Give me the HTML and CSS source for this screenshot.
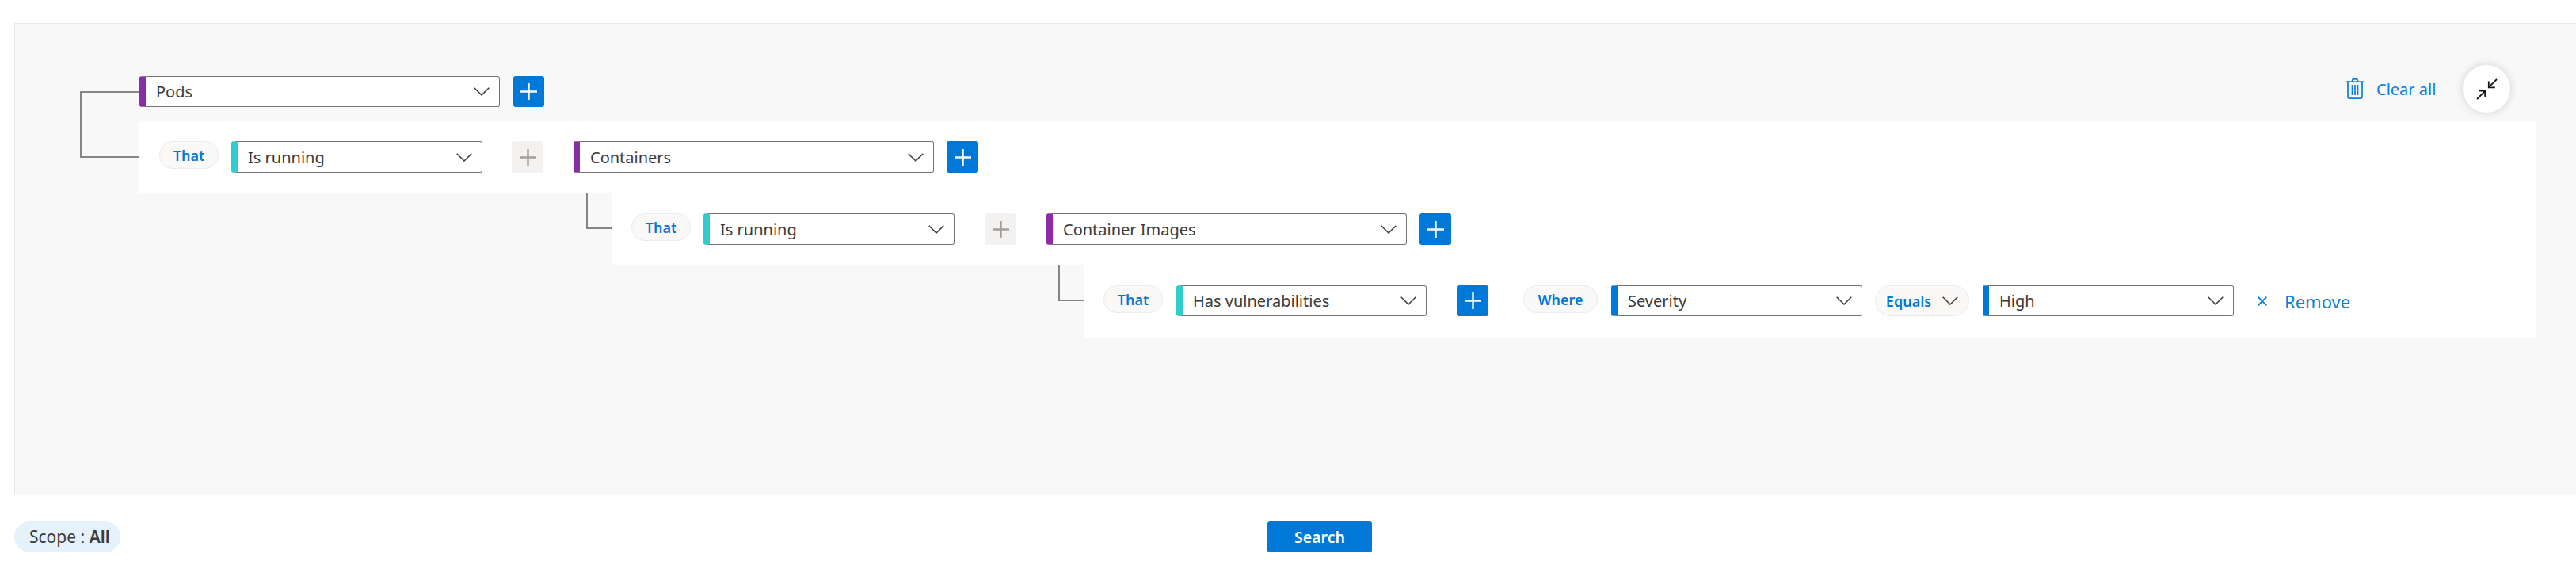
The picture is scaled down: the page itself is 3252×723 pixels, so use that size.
FILE: index.html
```
<!DOCTYPE html>
<html lang="en">
<head>
<meta charset="utf-8">
<title>Query builder</title>
<link rel="stylesheet" href="styles.css">
</head>
<body>
<svg width="0" height="0" class="defs">
  <symbol id="chevron" viewBox="0 0 20 11"><path d="M.7.7 10 10 19.3.7" fill="none" stroke="currentColor" stroke-width="1.5"/></symbol>
  <symbol id="plus" viewBox="0 0 21 21"><path d="M10.5 0v21M0 10.5h21" fill="none" stroke="currentColor" stroke-width="2.4"/></symbol>
</svg>
<main class="panel">
  <div class="root-link"></div>
  <div class="tree">
    <header class="head">
      <div class="select entity wide"><span>Pods</span><svg class="chev"><use href="#chevron"/></svg></div>
      <button class="add"><svg><use href="#plus"/></svg></button>
      <div class="clear">
        <svg class="trash" viewBox="0 0 22 26" fill="none" stroke="currentColor" stroke-width="1.7"><path d="M0 4h22M7.6 4V2.2Q7.6.9 9 .9h4Q14.4.9 14.4 2.2V4M2 4v19Q2 25.1 4.2 25.1h13.6Q20 25.1 20 23V4M7.5 8v13M11 8v13M14.5 8v13"/></svg>
        <span>Clear all</span>
      </div>
      <button class="collapse"><svg viewBox="0 0 27 27" fill="none" stroke="currentColor" stroke-width="1.8"><path d="M26 1 15.8 11.2M15.8 3.5v7.8h8M1 26 11.2 15.8M3.2 15.7h8v7.8"/></svg></button>
    </header>
    <section class="clause">
      <span class="pill">That</span>
      <div class="select relation"><span>Is running</span><svg class="chev"><use href="#chevron"/></svg></div>
      <button class="add off"><svg><use href="#plus"/></svg></button>
      <div class="select entity wide"><span>Containers</span><svg class="chev"><use href="#chevron"/></svg></div>
      <button class="add"><svg><use href="#plus"/></svg></button>
    </section>
    <div class="line second">
      <div class="link"></div>
      <section class="clause">
        <span class="pill">That</span>
        <div class="select relation"><span>Is running</span><svg class="chev"><use href="#chevron"/></svg></div>
        <button class="add off"><svg><use href="#plus"/></svg></button>
        <div class="select entity wide"><span>Container Images</span><svg class="chev"><use href="#chevron"/></svg></div>
        <button class="add"><svg><use href="#plus"/></svg></button>
      </section>
    </div>
    <div class="line third">
      <div class="link"></div>
      <section class="clause short">
        <span class="pill">That</span>
        <div class="select relation"><span>Has vulnerabilities</span><svg class="chev"><use href="#chevron"/></svg></div>
        <button class="add last"><svg><use href="#plus"/></svg></button>
        <span class="pill where">Where</span>
        <div class="select property"><span>Severity</span><svg class="chev"><use href="#chevron"/></svg></div>
        <span class="pill equals">Equals<svg class="chev"><use href="#chevron"/></svg></span>
        <div class="select property"><span>High</span><svg class="chev"><use href="#chevron"/></svg></div>
        <div class="remove"><svg viewBox="0 0 12 12"><path d="M.7.7 11.3 11.3M11.3.7.7 11.3" fill="none" stroke="currentColor" stroke-width="1.9"/></svg><span>Remove</span></div>
      </section>
    </div>
    <div class="tail"></div>
  </div>
</main>
<footer class="foot">
  <div class="scope">Scope : <b>All</b></div>
  <button class="search">Search</button>
</footer>
</body>
</html>
```
FILE: styles.css
```
* { box-sizing: border-box; }
body { margin: 0; padding-top: 29px; width: 3252px; height: 723px; overflow: hidden; background: #fff; color: #3b3a39; font: 20px "Noto Sans", "Open Sans", sans-serif; }
svg { display: block; flex: none; }
.defs { position: absolute; }
button { border: 0; padding: 0; font: inherit; }

.panel { display: flex; height: 596px; margin-left: 18px; padding-top: 52px; background: #f8f8f8; border: 1px solid #e8e8e8; border-right: 0; }
.root-link { width: 75px; height: 84px; margin: 33px 0 0 82px; border: 2px solid #858585; border-right: 0; }
.tree { width: 3026px; }

.head { display: flex; height: 71px; padding-top: 14px; }
.clear { display: flex; align-items: center; gap: 16px; height: 32px; margin-left: auto; color: #0f7ddb; }
.trash { width: 22px; height: 26px; }
.clear span { width: 76px; white-space: nowrap; }
.collapse { display: grid; place-items: center; width: 60px; height: 60px; margin: -14px 33px 0 33px; border-radius: 50%; background: #fff; color: #161616; box-shadow: 0 0 12px rgba(0,0,0,.16); }
.collapse svg { width: 27px; height: 27px; }

.clause { display: flex; align-items: flex-start; flex: 1; height: 91px; padding: 25px 0 0 25px; background: #fff; }
.line { display: flex; }
.second { padding-left: 564px; }
.third { padding-left: 1160px; }
.link { width: 32px; height: 45px; border: solid #858585; border-width: 0 0 2px 2px; }

.select { display: flex; align-items: center; justify-content: space-between; width: 317px; height: 40px; padding: 0 12px 0 13px; background: #fff; border: 1px solid #747474; border-left: 8px solid; border-radius: 3px; white-space: nowrap; }
.wide { width: 455px; }
.entity { border-left-color: #8a2da5; }
.relation { border-left-color: #33cccc; }
.property { border-left-color: #0078d7; }
.head .select, .head .add, .short .select, .short .add { height: 39px; }
.chev { width: 20px; height: 11px; color: #3b3a39; }

.add { display: grid; place-items: center; width: 40px; height: 40px; border-radius: 3px; background: #0078d7; color: #fff; }
.add svg { width: 21px; height: 21px; }
.wide + .add { margin-left: 16px; }
.head .wide + .add { width: 39px; margin-left: 17px; }
.off { margin: 0 38px 0 37px; background: #f3f2f1; color: #a19f9d; }
.line .off { margin-left: 38px; }
.last { margin-left: 38px; }

.pill { display: flex; align-items: center; justify-content: center; width: 75px; height: 35px; margin-right: 16px; border: 1px solid #eaeaea; border-radius: 18px; background: #faf9f8; color: #0078d7; font-size: 18px; font-weight: 600; }
.line .relation { margin-left: 0; }
.short .relation { margin-left: 1px; width: 316px; }
.where { width: 94px; margin: 0 17px 0 44px; }
.equals { width: 119px; height: 39px; gap: 14px; margin: 0 17px 0 16px; border-radius: 20px; }
.remove { display: flex; align-items: center; gap: 22px; height: 39px; margin-left: 30px; color: #0f7ddb; font-size: 22px; }
.remove svg { width: 12px; height: 12px; }
.tail { width: 73px; height: 2px; margin: -2px 0 0 1650px; background: #f8f8f8; }

.foot { display: flex; padding: 33px 0 0 18px; }
.scope { width: 134px; height: 39px; padding-left: 19px; border-radius: 20px; background: #e5f1fb; font-size: 21px; line-height: 39px; white-space: nowrap; }
.scope b { font-weight: 600; }
.search { width: 132px; height: 39px; margin-left: 1448px; border-radius: 3px; background: #0078d7; color: #fff; font-size: 19.5px; font-weight: 600; }
```
